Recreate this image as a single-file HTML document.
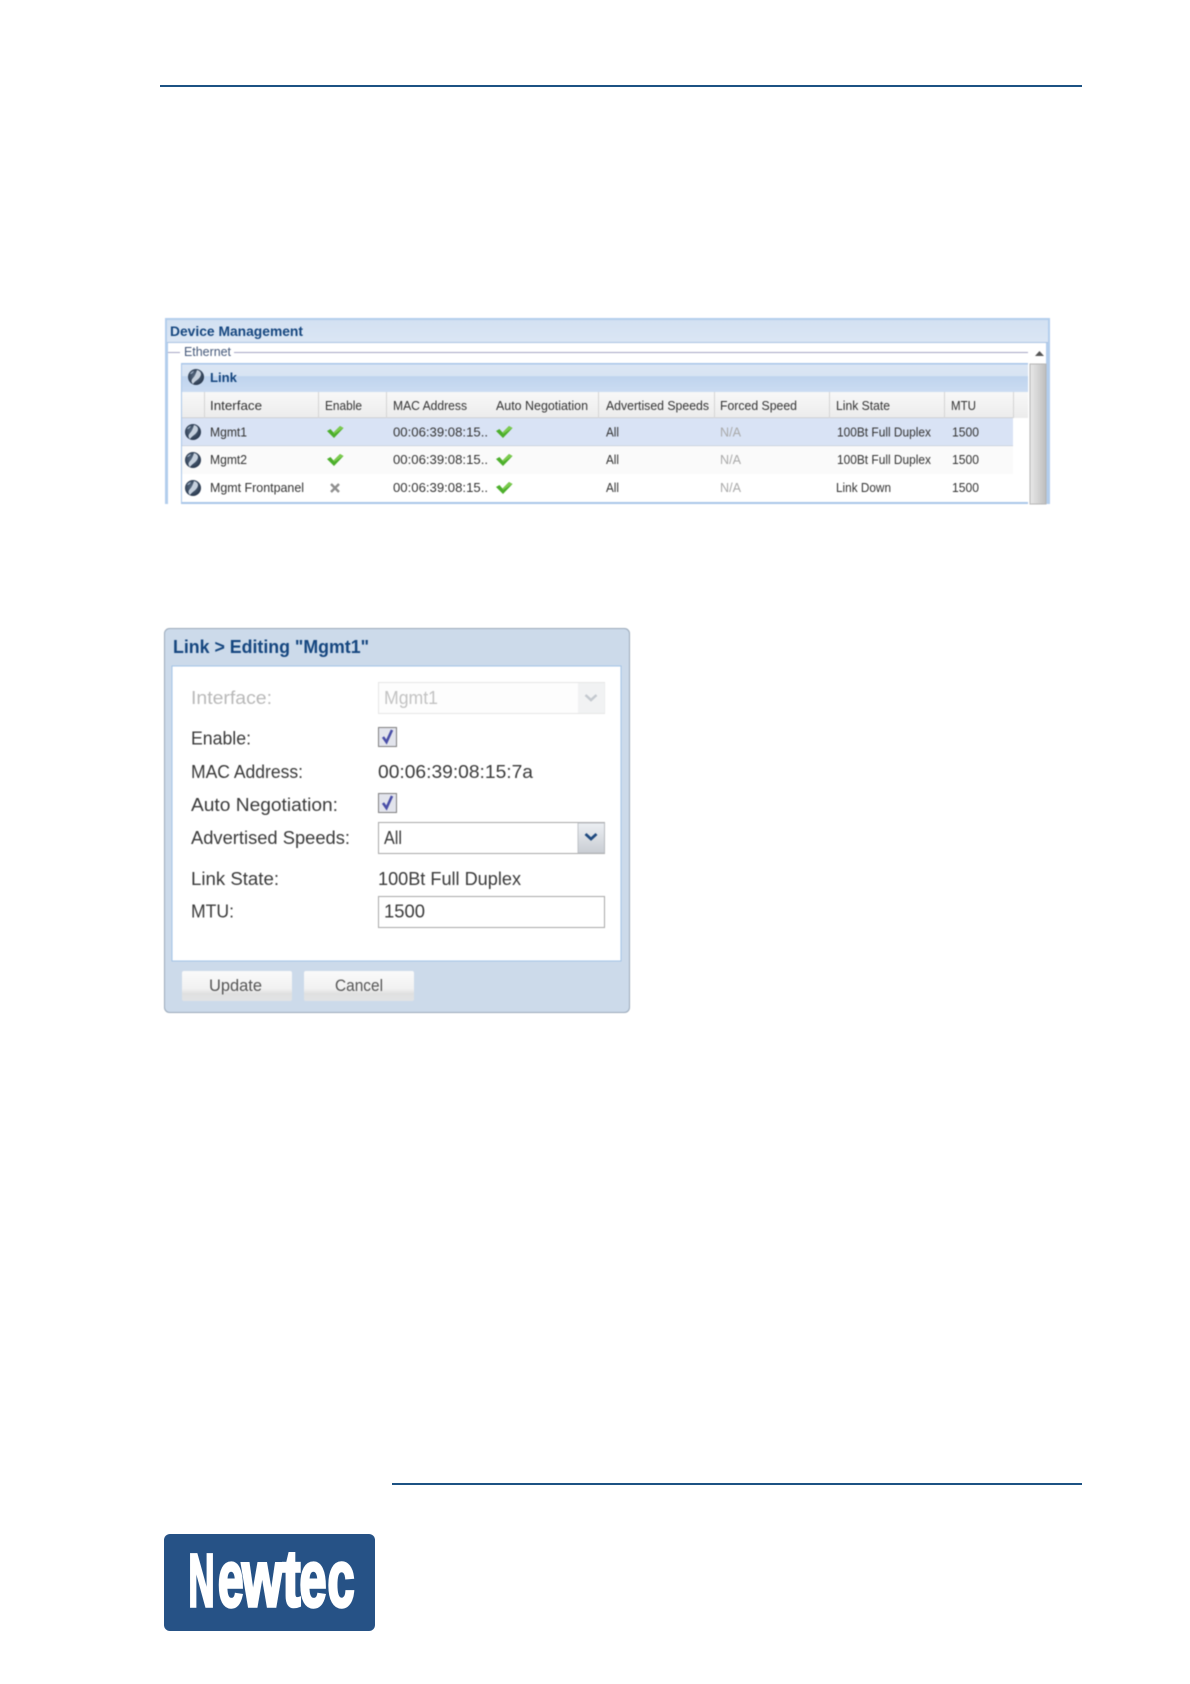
<!DOCTYPE html>
<html lang="en">
<head>
<meta charset="utf-8">
<title>Device Management</title>
<style>
html,body{margin:0;padding:0;background:#fff;width:1190px;height:1684px;overflow:hidden}
svg{display:block;position:absolute;left:0;top:0}
text{font-family:"Liberation Sans",sans-serif;fill:#333;font-size:12.500px}
.b{font-weight:bold;fill:#15467f}
.na{fill:#a9a9a9}
.d text{font-size:18px;fill:#3a3a3a}
.g{filter:blur(.45px)}
.l{font-weight:bold;fill:#fff;stroke:#fff;stroke-width:3.500px;stroke-linejoin:miter}
.lc{font-size:80px}
</style>
</head>
<body>
<svg width="1190" height="1684" viewBox="0 0 1190 1684" xmlns="http://www.w3.org/2000/svg">
<defs>
<linearGradient id="hd" x1="0" y1="0" x2="0" y2="1"><stop offset="0" stop-color="#dbe6f4"/><stop offset=".45" stop-color="#d8e4f3"/><stop offset=".46" stop-color="#bfd4ee"/><stop offset="1" stop-color="#cbdcf2"/></linearGradient>
<linearGradient id="ph" x1="0" y1="0" x2="0" y2="1"><stop offset="0" stop-color="#d3e1f2"/><stop offset="1" stop-color="#dbe6f4"/></linearGradient>
<linearGradient id="ch" x1="0" y1="0" x2="0" y2="1"><stop offset="0" stop-color="#f8f8f8"/><stop offset="1" stop-color="#ececec"/></linearGradient>
<linearGradient id="sb" x1="0" y1="0" x2="1" y2="0"><stop offset="0" stop-color="#e8e8e8"/><stop offset=".5" stop-color="#d4d4d4"/><stop offset="1" stop-color="#bdbdbd"/></linearGradient>
<linearGradient id="btn" x1="0" y1="0" x2="0" y2="1"><stop offset="0" stop-color="#fafafa"/><stop offset=".6" stop-color="#f1f1f1"/><stop offset=".75" stop-color="#e0e0e0"/><stop offset="1" stop-color="#e2e4e6"/></linearGradient>
<linearGradient id="tr" x1="0" y1="0" x2="0" y2="1"><stop offset="0" stop-color="#eceff3"/><stop offset="1" stop-color="#c9cdd3"/></linearGradient>
<radialGradient id="gl" cx=".45" cy=".45" r=".6"><stop offset="0" stop-color="#5c6f86"/><stop offset="1" stop-color="#26354a"/></radialGradient>
<g id="globe"><circle r="8" fill="url(#gl)"/><path d="M1 -7 C5 -6 6 -3 4 0 C2 3 -1 4 -3 7 C-5 5 -5 3 -3 1 C-1 -1 0 -4 1 -7Z" fill="#c5d0dd"/><path d="M-6 -3 C-5 -5 -3 -6 -2 -6 C-3 -4 -4 -3 -6 -3Z" fill="#9fb0c4"/></g>
<g id="chk"><path d="M-8 -1 L-4.500 -3 L-1.500 0.500 L5 -6 L8.500 -4 L-1 6 Z" fill="#4caf2c"/><path d="M-1.500 0.500 L5 -6 L8.500 -4 L-1 2 Z" fill="#7ccb4e"/></g>
</defs>

<!-- page rules -->
<rect x="160" y="85" width="922" height="2" fill="#1c5283"/>
<rect x="392" y="1483" width="690" height="2" fill="#1c5283"/>

<!-- Device Management panel -->
<g class="g">
<rect x="165" y="318" width="885" height="186" fill="#b3cdec"/>
<rect x="167" y="320" width="881" height="22" fill="url(#ph)"/>
<rect x="167" y="342" width="881" height="1" fill="#a9c3e2"/>
<rect x="168" y="343" width="878" height="161" fill="#fff"/>
<text class="b" x="170" y="336" style="font-size:13.500px" textLength="133" lengthAdjust="spacingAndGlyphs">Device Management</text>
<rect x="168" y="352" width="12" height="1" fill="#a6a6c4"/>
<rect x="234" y="352" width="794" height="1" fill="#a6a6c4"/>
<text x="184" y="356" style="fill:#45597a" textLength="47" lengthAdjust="spacingAndGlyphs">Ethernet</text>

<!-- scrollbar -->
<path d="M1035 356 L1044 356 L1039.500 351Z" fill="#555"/>
<rect x="1030" y="364" width="16" height="140" fill="url(#sb)" stroke="#b5b5b5"/>

<!-- Link grid -->
<rect x="181" y="363" width="847" height="141" fill="#fff"/>
<rect x="181" y="363" width="847" height="29" fill="url(#hd)"/>
<rect x="181" y="363" width="847" height="1.500" fill="#a9c6e8"/>
<rect x="181" y="363" width="1" height="141" fill="#a9c6e8"/>
<rect x="181" y="502" width="847" height="2" fill="#a9c6e8"/>
<use href="#globe" x="196" y="377"/>
<text class="b" x="210" y="382" style="font-size:13px" textLength="27" lengthAdjust="spacingAndGlyphs">Link</text>

<!-- column headers -->
<rect x="182" y="392" width="846" height="26" fill="url(#ch)"/>
<rect x="182" y="417.500" width="831" height="1" fill="#bcbcbc"/>
<g fill="#d4d4d4">
<rect x="204" y="392" width="1" height="26"/><rect x="318" y="392" width="1" height="26"/>
<rect x="386" y="392" width="1" height="26"/><rect x="598" y="392" width="1" height="26"/>
<rect x="714" y="392" width="1" height="26"/><rect x="829" y="392" width="1" height="26"/>
<rect x="944" y="392" width="1" height="26"/><rect x="1013" y="392" width="1" height="26"/>
</g>
<text x="210" y="410" textLength="52" lengthAdjust="spacingAndGlyphs">Interface</text>
<text x="325" y="410" textLength="37" lengthAdjust="spacingAndGlyphs">Enable</text>
<text x="393" y="410" textLength="74" lengthAdjust="spacingAndGlyphs">MAC Address</text>
<text x="496" y="410" textLength="92" lengthAdjust="spacingAndGlyphs">Auto Negotiation</text>
<text x="606" y="410" textLength="103" lengthAdjust="spacingAndGlyphs">Advertised Speeds</text>
<text x="720" y="410" textLength="77" lengthAdjust="spacingAndGlyphs">Forced Speed</text>
<text x="836" y="410" textLength="54" lengthAdjust="spacingAndGlyphs">Link State</text>
<text x="951" y="410" textLength="25" lengthAdjust="spacingAndGlyphs">MTU</text>

<!-- rows -->
<rect x="182" y="418" width="831" height="28" fill="#d9e3f5"/>
<rect x="182" y="445.500" width="831" height="1" fill="#b9bfca"/>
<rect x="182" y="446" width="831" height="28" fill="#fafafa"/>

<use href="#globe" x="193" y="432"/><use href="#globe" x="193" y="460"/><use href="#globe" x="193" y="488"/>

<text x="210" y="436.500" textLength="37" lengthAdjust="spacingAndGlyphs">Mgmt1</text>
<text x="210" y="464" textLength="37" lengthAdjust="spacingAndGlyphs">Mgmt2</text>
<text x="210" y="492" textLength="94" lengthAdjust="spacingAndGlyphs">Mgmt Frontpanel</text>

<use href="#chk" x="335" y="432"/><use href="#chk" x="335" y="460"/>
<path d="M331 484 L339 492 M339 484 L331 492" stroke="#8f8f8f" stroke-width="2.400" fill="none"/>

<text x="393" y="436.500" textLength="95" lengthAdjust="spacingAndGlyphs">00:06:39:08:15..</text>
<text x="393" y="464" textLength="95" lengthAdjust="spacingAndGlyphs">00:06:39:08:15..</text>
<text x="393" y="492" textLength="95" lengthAdjust="spacingAndGlyphs">00:06:39:08:15..</text>

<use href="#chk" x="504" y="432"/><use href="#chk" x="504" y="460"/><use href="#chk" x="504" y="488"/>

<text x="606" y="436.500" textLength="13" lengthAdjust="spacingAndGlyphs">All</text>
<text x="606" y="464" textLength="13" lengthAdjust="spacingAndGlyphs">All</text>
<text x="606" y="492" textLength="13" lengthAdjust="spacingAndGlyphs">All</text>

<text class="na" x="720" y="436.500" textLength="21" lengthAdjust="spacingAndGlyphs">N/A</text>
<text class="na" x="720" y="464" textLength="21" lengthAdjust="spacingAndGlyphs">N/A</text>
<text class="na" x="720" y="492" textLength="21" lengthAdjust="spacingAndGlyphs">N/A</text>

<text x="837" y="436.500" textLength="94" lengthAdjust="spacingAndGlyphs">100Bt Full Duplex</text>
<text x="837" y="464" textLength="94" lengthAdjust="spacingAndGlyphs">100Bt Full Duplex</text>
<text x="836" y="492" textLength="55" lengthAdjust="spacingAndGlyphs">Link Down</text>

<text x="952" y="436.500" textLength="27" lengthAdjust="spacingAndGlyphs">1500</text>
<text x="952" y="464" textLength="27" lengthAdjust="spacingAndGlyphs">1500</text>
<text x="952" y="492" textLength="27" lengthAdjust="spacingAndGlyphs">1500</text>
</g>

<!-- Edit dialog -->
<g class="g d">
<rect x="164.500" y="628.500" width="465" height="384" rx="5" fill="#ccdaea" stroke="#9aa9ba"/>
<rect x="172" y="666" width="449" height="295" fill="#fff" stroke="#a3c3e6"/>
<text x="173" y="653" style="font-size:18px;font-weight:bold;fill:#15467f" textLength="196" lengthAdjust="spacingAndGlyphs">Link &gt; Editing "Mgmt1"</text>

<text x="191" y="704" style="fill:#b9b9b9" textLength="81" lengthAdjust="spacingAndGlyphs">Interface:</text>
<text x="191" y="744.500" textLength="60" lengthAdjust="spacingAndGlyphs">Enable:</text>
<text x="191" y="778" textLength="112" lengthAdjust="spacingAndGlyphs">MAC Address:</text>
<text x="191" y="811" textLength="147" lengthAdjust="spacingAndGlyphs">Auto Negotiation:</text>
<text x="191" y="844" textLength="159" lengthAdjust="spacingAndGlyphs">Advertised Speeds:</text>
<text x="191" y="885" textLength="88" lengthAdjust="spacingAndGlyphs">Link State:</text>
<text x="191" y="917.500" textLength="43" lengthAdjust="spacingAndGlyphs">MTU:</text>

<!-- disabled combo -->
<rect x="378.500" y="682.500" width="226" height="31" fill="#fdfdfd" stroke="#e6e6e6"/>
<rect x="578" y="683" width="26.500" height="30" fill="#f1f2f3"/>
<path d="M585.500 695 L591 700 L596.500 695" fill="none" stroke="#c4c9cf" stroke-width="2.500"/>
<text x="384" y="704" style="fill:#c3c3c3" textLength="54" lengthAdjust="spacingAndGlyphs">Mgmt1</text>

<!-- checkboxes -->
<rect x="378.500" y="727.500" width="18" height="19" fill="#e2e4ec" stroke="#7f7f7f"/>
<path d="M383 737 L386.500 742 L392 730" fill="none" stroke="#4a4fa8" stroke-width="2.600"/>
<rect x="378.500" y="793.500" width="18" height="19" fill="#e2e4ec" stroke="#7f7f7f"/>
<path d="M383 803 L386.500 808 L392 796" fill="none" stroke="#4a4fa8" stroke-width="2.600"/>

<text x="378" y="778" textLength="155" lengthAdjust="spacingAndGlyphs">00:06:39:08:15:7a</text>

<!-- combo -->
<rect x="378.500" y="822.500" width="226" height="31" fill="#fff" stroke="#a8a8a8"/>
<rect x="578" y="823" width="26.500" height="30" fill="url(#tr)" stroke="#b5b8bd" stroke-width=".8"/>
<path d="M585.500 834 L591 839 L596.500 834" fill="none" stroke="#1f4a80" stroke-width="2.800"/>
<text x="384" y="844" textLength="18" lengthAdjust="spacingAndGlyphs">All</text>

<text x="378" y="885" textLength="143" lengthAdjust="spacingAndGlyphs">100Bt Full Duplex</text>

<!-- input -->
<rect x="378.500" y="896.500" width="226" height="31" fill="#fff" stroke="#a8a8a8"/>
<text x="384" y="917.500" textLength="41" lengthAdjust="spacingAndGlyphs">1500</text>

<!-- buttons -->
<rect x="182" y="971" width="110" height="30" rx="2" fill="url(#btn)"/>
<rect x="304" y="971" width="110" height="30" rx="2" fill="url(#btn)"/>
<text x="209" y="991" style="font-size:17px;fill:#555" textLength="53" lengthAdjust="spacingAndGlyphs">Update</text>
<text x="335" y="991" style="font-size:17px;fill:#555" textLength="48" lengthAdjust="spacingAndGlyphs">Cancel</text>
</g>

<!-- Logo -->
<rect x="164" y="1534" width="211" height="97" rx="6" fill="#265286"/>
<g aria-label="Newtec">
<text class="l" x="188.500" y="1606" style="font-size:74px" textLength="26" lengthAdjust="spacingAndGlyphs">N</text>
<text class="l lc" x="218" y="1606" textLength="25.500" lengthAdjust="spacingAndGlyphs">e</text>
<text class="l lc" x="242" y="1606" textLength="40.500" lengthAdjust="spacingAndGlyphs">w</text>
<text class="l lc" x="282.500" y="1606" textLength="18" lengthAdjust="spacingAndGlyphs">t</text>
<text class="l lc" x="299.500" y="1606" textLength="27" lengthAdjust="spacingAndGlyphs">e</text>
<text class="l lc" x="327.500" y="1606" textLength="27" lengthAdjust="spacingAndGlyphs">c</text>
</g>
</svg>
</body>
</html>
